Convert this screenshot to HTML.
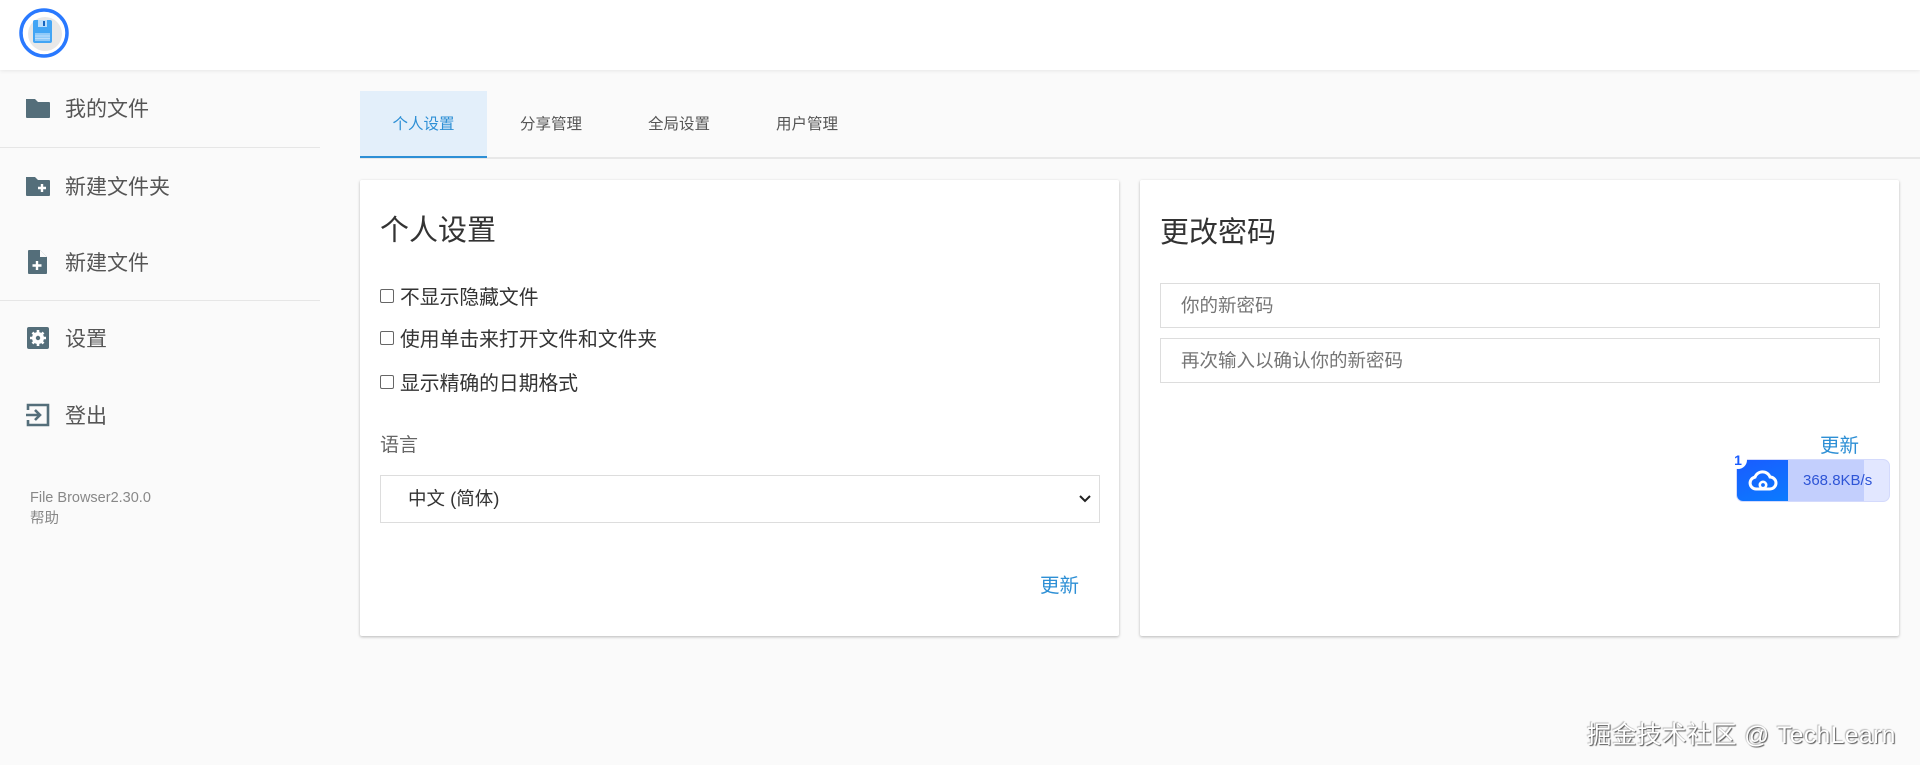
<!DOCTYPE html>
<html><head><meta charset="utf-8"><style>
*{box-sizing:border-box;margin:0;padding:0}
body{width:1920px;height:765px;overflow:hidden;background:#fafafa;font-family:"Liberation Sans","Noto Sans CJK SC",sans-serif;color:#333;position:relative}
.hdr{position:absolute;left:0;top:0;width:1920px;height:70px;background:#fff;box-shadow:0 1px 4px rgba(0,0,0,.08)}
.abs{position:absolute}
.nav{position:absolute;left:0;width:320px;height:76px;display:flex;align-items:center;font-size:21px;color:#555}
.nav svg{position:absolute;left:25px}
.nav span{position:absolute;left:65px}
.div{position:absolute;left:0;width:320px;height:1px;background:#e6e6e6}
.tab{position:absolute;top:91px;height:67px;line-height:67px;font-size:15.5px;color:#555;text-align:center}
.card{position:absolute;top:180px;width:759px;height:456px;background:#fff;box-shadow:0 1px 3px rgba(0,0,0,.18),0 1px 2px rgba(0,0,0,.1);border-radius:2px}
.ttl{position:absolute;font-size:29px;color:#333}
.cb{position:absolute;left:20px;font-size:19.8px;color:#333;display:flex;align-items:center}
.cb i{display:inline-block;width:14px;height:14px;border:1px solid #666;border-radius:2px;margin-right:6px}
.inp{position:absolute;left:20px;width:720px;height:45px;border:1px solid #ddd;font-size:18.5px;color:#757575;padding-left:20px;line-height:43px}
.blue{color:#2d8fd5}
</style></head><body>
<div class="hdr">
<svg class="abs" style="left:18px;top:7px" width="52" height="52" viewBox="0 0 52 52"><circle cx="26" cy="26" r="23" fill="#fff" stroke="#2979ff" stroke-width="3.5"/><circle cx="27" cy="27" r="17" fill="#e8e8e8"/><rect x="15" y="13" width="19" height="23" rx="2" fill="#42a5f5"/><rect x="20" y="13" width="9" height="7" fill="#bbdefb"/><rect x="25" y="14" width="2" height="5" fill="#1565c0"/><rect x="17" y="26" width="15" height="8" fill="#90caf9"/><line x1="17" y1="29" x2="32" y2="29" stroke="#bbdefb"/><line x1="17" y1="31.5" x2="32" y2="31.5" stroke="#bbdefb"/></svg>
</div>

<div class="nav" style="top:70px"><svg width="26" height="22" viewBox="0 0 26 22"><path d="M1 2h9l3 3h11a1 1 0 0 1 1 1v14a1 1 0 0 1-1 1H2a1 1 0 0 1-1-1z" fill="#546e7a"/></svg><span>我的文件</span></div>
<div class="div" style="top:147px"></div>
<div class="nav" style="top:148px"><svg width="26" height="22" viewBox="0 0 26 22"><path d="M1 2h9l3 3h11a1 1 0 0 1 1 1v14a1 1 0 0 1-1 1H2a1 1 0 0 1-1-1z" fill="#546e7a"/><path d="M17 9v8M13 13h8" stroke="#fff" stroke-width="2.4"/></svg><span>新建文件夹</span></div>
<div class="nav" style="top:224px"><svg width="26" height="26" viewBox="0 0 26 26"><path d="M4 1h11l7 7v16a1 1 0 0 1-1 1H4a1 1 0 0 1-1-1V2a1 1 0 0 1 1-1z" fill="#546e7a"/><path d="M15 1v7h7" fill="#fafafa"/><path d="M12 12v9M7.5 16.5h9" stroke="#fff" stroke-width="2.4"/></svg><span>新建文件</span></div>
<div class="div" style="top:300px"></div>
<div class="nav" style="top:300px"><svg width="26" height="24" viewBox="0 0 26 24"><rect x="2" y="1" width="22" height="22" rx="2" fill="#546e7a"/><circle cx="13" cy="12" r="6" fill="#fff"/><circle cx="13" cy="12" r="2.2" fill="#546e7a"/><path d="M13 4v4M13 16v4M5 12h4M17 12h4M7.5 6.5l2.8 2.8M15.7 14.7l2.8 2.8M7.5 17.5l2.8-2.8M15.7 9.3l2.8-2.8" stroke="#fff" stroke-width="2.6"/></svg><span>设置</span></div>
<div class="nav" style="top:377px"><svg width="26" height="24" viewBox="0 0 26 24"><path d="M3 7V2h20v20H3v-5" fill="none" stroke="#546e7a" stroke-width="2.6"/><path d="M1 12h13M10 7l5 5-5 5" fill="none" stroke="#546e7a" stroke-width="2.6"/></svg><span>登出</span></div>
<div class="abs" style="left:30px;top:488px;font-size:14.5px;color:#888;line-height:21px">File Browser2.30.0<br>帮助</div>

<div class="abs" style="left:360px;top:157px;width:1560px;height:2px;background:#e8e8e8"></div>
<div class="abs" style="left:360px;top:91px;width:127px;height:67px;background:#e3effa;border-bottom:2px solid #2d8fd5"></div>
<div class="tab" style="left:360px;width:127px;color:#2d8fd5">个人设置</div>
<div class="tab" style="left:487px;width:128px">分享管理</div>
<div class="tab" style="left:615px;width:128px">全局设置</div>
<div class="tab" style="left:743px;width:128px">用户管理</div>

<div class="card" style="left:360px">
<div class="ttl" style="left:20px;top:27px">个人设置</div>
<div class="cb" style="top:101px"><i></i>不显示隐藏文件</div>
<div class="cb" style="top:143px"><i></i>使用单击来打开文件和文件夹</div>
<div class="cb" style="top:187px"><i></i>显示精确的日期格式</div>
<div class="abs" style="left:20px;top:250px;font-size:19px;color:#666">语言</div>
<div class="inp" style="top:295px;height:48px;line-height:46px;color:#333;padding-left:27px">中文 (简体)<svg class="abs" style="right:8px;top:19px" width="12" height="8" viewBox="0 0 12 8"><path d="M1 1l5 5 5-5" fill="none" stroke="#222" stroke-width="2"/></svg></div>
<div class="abs blue" style="left:680px;top:389px;font-size:19.5px">更新</div>
</div>

<div class="card" style="left:1140px">
<div class="ttl" style="left:20px;top:29px">更改密码</div>
<div class="inp" style="top:103px">你的新密码</div>
<div class="inp" style="top:158px">再次输入以确认你的新密码</div>
<div class="abs blue" style="left:680px;top:249px;font-size:19.5px">更新</div>
</div>

<div class="abs" style="left:1736px;top:459px;width:154px;height:43px;border-radius:7px;background:#e2e7ff;border:1px solid #d4dafc;overflow:hidden">
<div class="abs" style="left:0;top:0;width:51px;height:43px;background:linear-gradient(160deg,#1a5cff,#0a7cff)"></div>
<div class="abs" style="left:51px;top:0;width:76px;height:43px;background:#c3cffd"></div>
<svg class="abs" style="left:11px;top:9px" width="30" height="24" viewBox="0 0 30 24"><path d="M8 20a6 6 0 0 1-1-11.9A8 8 0 0 1 22 8a6 6 0 0 1 0 12z" fill="none" stroke="#fff" stroke-width="3"/><circle cx="15" cy="16" r="3.2" fill="none" stroke="#fff" stroke-width="2.6"/></svg>
<div class="abs" style="left:66px;top:12px;font-size:15px;color:#2e55d6">368.8KB/s</div>
</div>
<div class="abs" style="left:1729px;top:451px;width:18px;height:18px;border-radius:9px;background:#fff;font-size:14px;font-weight:bold;color:#1a5cff;text-align:center;line-height:18px">1</div>

<div class="abs" style="left:1587px;top:716px;font-size:24.5px;color:#fff;text-shadow:1px 1px 1px #555,-1px -1px 1px #bbb;letter-spacing:.5px">掘金技术社区 @ TechLearn</div>
</body></html>
